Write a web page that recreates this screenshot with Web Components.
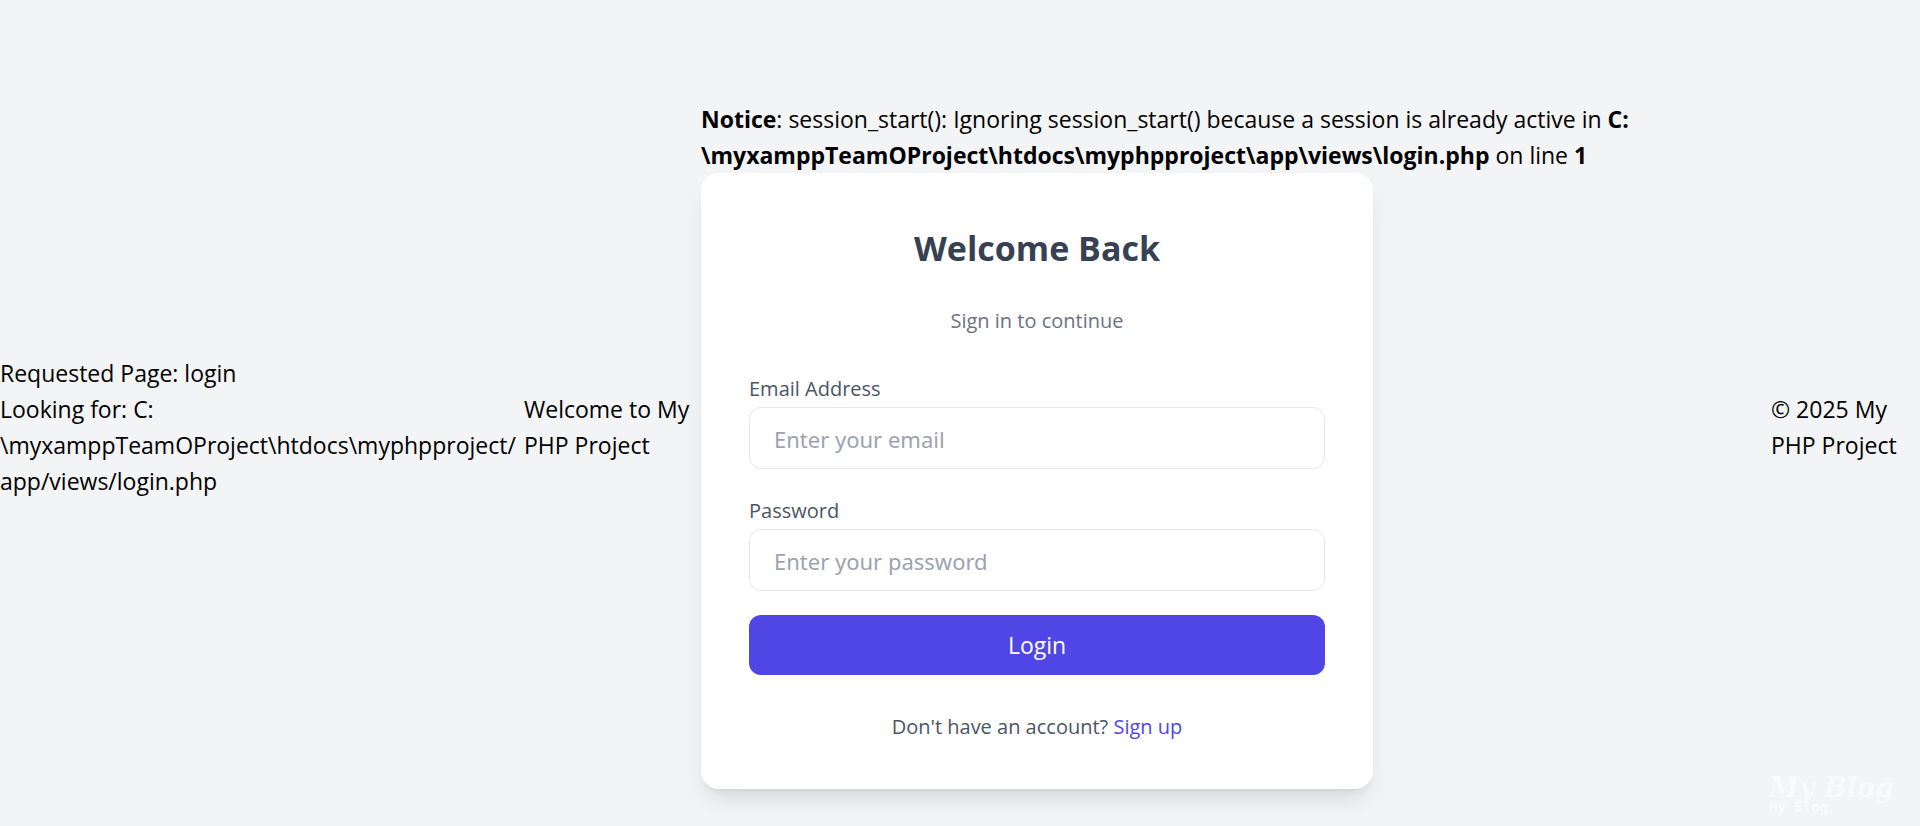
<!DOCTYPE html>
<html lang="en">
<head>
<meta charset="utf-8">
<title>Login</title>
<style>
  body { margin: 0; background: #f3f4f6; color: #000; font: 23px/36px "Open Sans", "Noto Sans", sans-serif; }
</style>
</head>
<body>
<blog-page>
  <page-note slot="debug">Requested Page: login<br>Looking for: C:<br>\myxamppTeamOProject\htdocs\myphpproject/<br>app/views/login.php</page-note>
  <page-note slot="intro">Welcome to My<br>PHP Project</page-note>
  <php-notice>session_start(): Ignoring session_start() because a session is already active in</php-notice>
  <login-card></login-card>
  <page-note slot="copyright">© 2025 My<br>PHP Project</page-note>
  <blog-mark slot="mark"></blog-mark>
</blog-page>
<script>
const define = (name, html) => {
  const template = document.createElement('template');
  template.innerHTML = html;
  customElements.define(name, class extends HTMLElement {
    constructor() {
      super();
      this.attachShadow({ mode: 'open' }).append(template.content.cloneNode(true));
    }
  });
};

define('blog-page', `
  <style>
    :host {
      box-sizing: border-box; min-height: 100vh; padding-top: 28px; position: relative;
      display: grid; align-items: center;
      grid-template-columns: minmax(0, 524fr) minmax(0, 177fr) minmax(0, 1070fr) minmax(0, 149fr);
    }
    main { padding-top: 36px; }
  </style>
  <header><slot name="debug"></slot></header>
  <div><slot name="intro"></slot></div>
  <main><slot></slot></main>
  <footer><slot name="copyright"></slot></footer>
  <slot name="mark"></slot>`);

define('page-note', `
  <style>:host { display: block; white-space: nowrap; }</style>
  <slot></slot>`);

define('php-notice', `
  <style>:host { display: block; white-space: nowrap; }</style>
  <b>Notice</b>: <slot></slot> <b>C:<br>\\myxamppTeamOProject\\htdocs\\myphpproject\\app\\views\\login.php</b> on line <b>1</b>`);

define('login-card', `
  <style>
    :host {
      display: block; box-sizing: border-box; max-width: 672px; padding: 48px;
      background: #fff; border-radius: 18px; text-align: center;
      font-size: 20px; line-height: 28px; color: #4b5563;
      box-shadow: 0 15px 23px -5px rgb(0 0 0 / .1), 0 6px 9px -6px rgb(0 0 0 / .1);
    }
    h2 { margin: 0 0 32px; font-size: 34px; line-height: 54px; color: #374151; }
    p { margin: 0; }
    .lead { color: #6b7280; margin-bottom: 40px; }
    form { display: flex; flex-direction: column; }
    text-field { margin-bottom: 28px; }
    text-field:last-of-type { margin-bottom: 24px; }
    button {
      height: 60px; margin-bottom: 38px; padding: 0; border: 0; border-radius: 12px;
      background: #4f46e5; color: #fff; font: 23px/36px "Open Sans", "Noto Sans", sans-serif;
    }
    a { color: #4f46e5; text-decoration: none; }
  </style>
  <h2>Welcome Back</h2>
  <p class="lead">Sign in to continue</p>
  <form>
    <text-field label="Email Address" type="email" placeholder="Enter your email"></text-field>
    <text-field label="Password" type="password" placeholder="Enter your password"></text-field>
    <button type="submit">Login</button>
  </form>
  <p>Don't have an account? <a href="#signup">Sign up</a></p>`);

customElements.define('text-field', class extends HTMLElement {
  constructor() {
    super();
    this.attachShadow({ mode: 'open' }).innerHTML = `
      <style>
        :host { display: block; text-align: left; }
        label { display: block; margin-bottom: 4px; }
        input {
          display: block; box-sizing: border-box; width: 100%; height: 62px; padding: 2px 24px 0;
          border: 1px solid #e5e7eb; border-radius: 12px; background: #fff; color: #000;
          font: 22px/36px "Noto Sans", "Open Sans", sans-serif; outline: none;
        }
        input:focus { border-color: #4f46e5; }
        input::placeholder { color: #9ca3af; opacity: 1; }
      </style>
      <label for="field"></label><input id="field">`;
  }
  connectedCallback() {
    this.shadowRoot.querySelector('label').textContent = this.getAttribute('label');
    const input = this.shadowRoot.querySelector('input');
    input.type = this.getAttribute('type');
    input.placeholder = this.getAttribute('placeholder');
  }
});

define('blog-mark', `
  <style>
    :host { display: block; position: absolute; right: 26px; bottom: 12px; width: 125px; color: #f9fafb; white-space: nowrap; }
    strong { display: block; font: italic bold 27px/24px "DejaVu Serif", serif; }
    small { display: block; font: bold 14px/14px "DejaVu Sans Mono", monospace; }
  </style>
  <strong>My Blog</strong><small>My Blog</small>`);
</script>
</body>
</html>
